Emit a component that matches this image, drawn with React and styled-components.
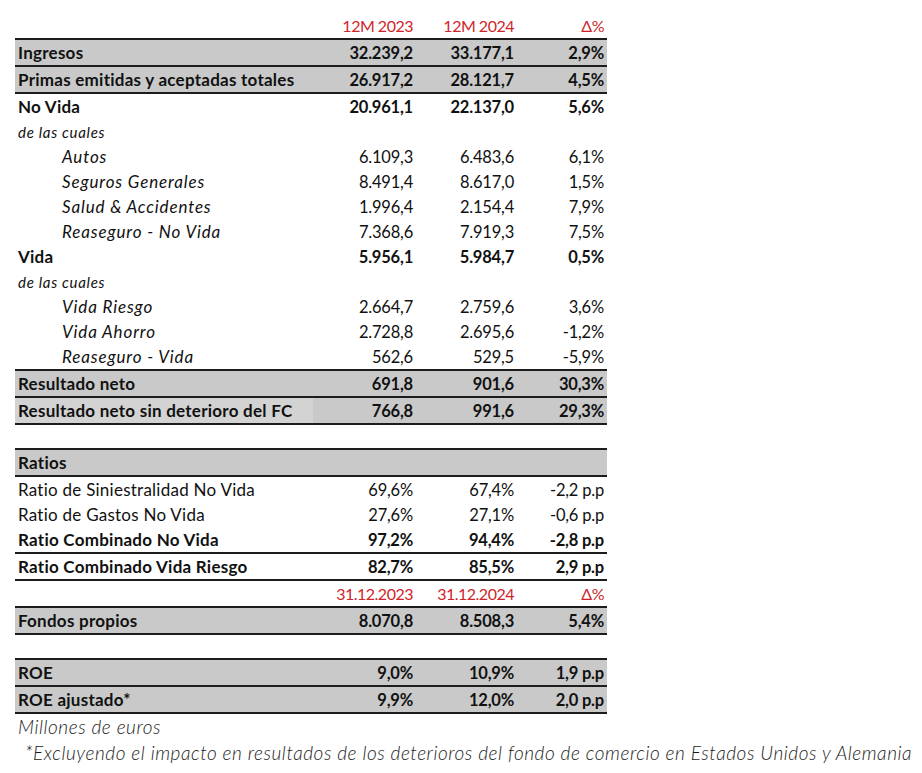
import styled, { createGlobalStyle } from 'styled-components'

const Global = createGlobalStyle`
	body {
		margin: 0;
		background: #fff;
		font-family: Lato, "Open Sans", sans-serif;
		color: #111;
	}
`;

const Page = styled.div`
	padding: 13px 0 0 15px;
`;

const Table = styled.div`
	width: 592px;
	display: flex;
	flex-direction: column;
`;

const Row = styled.div`
	display: grid;
	grid-template-columns: 298px 100px 101px 93px;
	align-items: center;
	height: ${p => p.$h || 25}px;
	box-sizing: content-box;
	background: ${p => (p.$shade ? '#c9c9c9' : 'transparent')};
	border-top: ${p => (p.$top ? '2px solid #1c1c1c' : 'none')};
	border-bottom: ${p => (p.$bottom ? '2px solid #1c1c1c' : 'none')};
	font-weight: ${p => (p.$bold ? 700 : 400)};
	font-size: 16px;
`;

const Label = styled.div`
	height: 100%;
	display: flex;
	align-items: center;
	padding-left: ${p => (p.$indent ? 47 : 3)}px;
	font-style: ${p => (p.$italic ? 'italic' : 'normal')};
	font-size: ${p => (p.$small ? 15 : 17)}px;
	letter-spacing: ${p => (p.$small ? 0.7 : p.$italic ? 0.85 : 0.25)}px;
	background: ${p => p.$bg || 'transparent'};
	white-space: nowrap;
`;

const Num = styled.div`
	text-align: right;
	padding-right: ${p => (p.$last ? 3 : 0)}px;
	color: ${p => (p.$red ? '#d0242b' : 'inherit')};
	font-size: ${p => (p.$red ? 16 : 16.5)}px;
	letter-spacing: ${p => (p.$red ? -0.5 : -0.2)}px;
	white-space: nowrap;
`;

const Note = styled.div`
	font-style: italic;
	font-weight: 300;
	font-size: 19px;
	letter-spacing: 0.55px;
	height: 26px;
	line-height: 26px;
	padding-left: ${p => p.$pad}px;
	white-space: nowrap;
	color: #1a1a1a;
`;

const rows = [
	{ head: ['12M 2023', '12M 2024', 'Δ%'] },
	{ label: 'Ingresos', v: ['32.239,2', '33.177,1', '2,9%'], bold: true, shade: true, top: true, bottom: true },
	{ label: 'Primas emitidas y aceptadas totales', v: ['26.917,2', '28.121,7', '4,5%'], bold: true, shade: true, bottom: true },
	{ label: 'No Vida', v: ['20.961,1', '22.137,0', '5,6%'], bold: true },
	{ label: 'de las cuales', italic: true, small: true },
	{ label: 'Autos', v: ['6.109,3', '6.483,6', '6,1%'], italic: true, indent: true },
	{ label: 'Seguros Generales', v: ['8.491,4', '8.617,0', '1,5%'], italic: true, indent: true },
	{ label: 'Salud & Accidentes', v: ['1.996,4', '2.154,4', '7,9%'], italic: true, indent: true },
	{ label: 'Reaseguro - No Vida', v: ['7.368,6', '7.919,3', '7,5%'], italic: true, indent: true },
	{ label: 'Vida', v: ['5.956,1', '5.984,7', '0,5%'], bold: true },
	{ label: 'de las cuales', italic: true, small: true },
	{ label: 'Vida Riesgo', v: ['2.664,7', '2.759,6', '3,6%'], italic: true, indent: true },
	{ label: 'Vida Ahorro', v: ['2.728,8', '2.695,6', '-1,2%'], italic: true, indent: true },
	{ label: 'Reaseguro - Vida', v: ['562,6', '529,5', '-5,9%'], italic: true, indent: true },
	{ label: 'Resultado neto', v: ['691,8', '901,6', '30,3%'], bold: true, shade: true, top: true, bottom: true },
	{ label: 'Resultado neto sin deterioro del FC', v: ['766,8', '991,6', '29,3%'], bold: true, shade: true, bottom: true, labelBg: '#d3d3d3' },
	{ blank: true, h: 23 },
	{ label: 'Ratios', bold: true, shade: true, top: true, bottom: true },
	{ label: 'Ratio de Siniestralidad No Vida', v: ['69,6%', '67,4%', '-2,2 p.p'] },
	{ label: 'Ratio de Gastos No Vida', v: ['27,6%', '27,1%', '-0,6 p.p'] },
	{ label: 'Ratio Combinado No Vida', v: ['97,2%', '94,4%', '-2,8 p.p'], bold: true, bottom: true },
	{ label: 'Ratio Combinado Vida Riesgo', v: ['82,7%', '85,5%', '2,9 p.p'], bold: true, bottom: true },
	{ head: ['31.12.2023', '31.12.2024', 'Δ%'] },
	{ label: 'Fondos propios', v: ['8.070,8', '8.508,3', '5,4%'], bold: true, shade: true, top: true, bottom: true },
	{ blank: true, h: 23 },
	{ label: 'ROE', v: ['9,0%', '10,9%', '1,9 p.p'], bold: true, shade: true, top: true, bottom: true },
	{ label: 'ROE ajustado*', v: ['9,9%', '12,0%', '2,0 p.p'], bold: true, shade: true, bottom: true },
];

function App() {
	return (
		<Page>
			<Global />
			<Table>
				{rows.map((r, i) => {
					if (r.blank) return <Row key={i} $h={r.h} />
					if (r.head) {
						return (
							<Row key={i}>
								<Label />
								{r.head.map((h, j) => (
									<Num key={j} $red $last={j === 2}>{h}</Num>
								))}
							</Row>
						)
					}
					return (
						<Row key={i} $bold={r.bold} $shade={r.shade} $top={r.top} $bottom={r.bottom}>
							<Label $indent={r.indent} $italic={r.italic} $small={r.small} $bg={r.labelBg}>{r.label}</Label>
							{(r.v || ['', '', '']).map((v, j) => (
								<Num key={j} $last={j === 2}>{v}</Num>
							))}
						</Row>
					)
				})}
				<Note $pad={3}>Millones de euros</Note>
				<Note $pad={10}>*Excluyendo el impacto en resultados de los deterioros del fondo de comercio en Estados Unidos y Alemania</Note>
			</Table>
		</Page>
	)
}

export default App
